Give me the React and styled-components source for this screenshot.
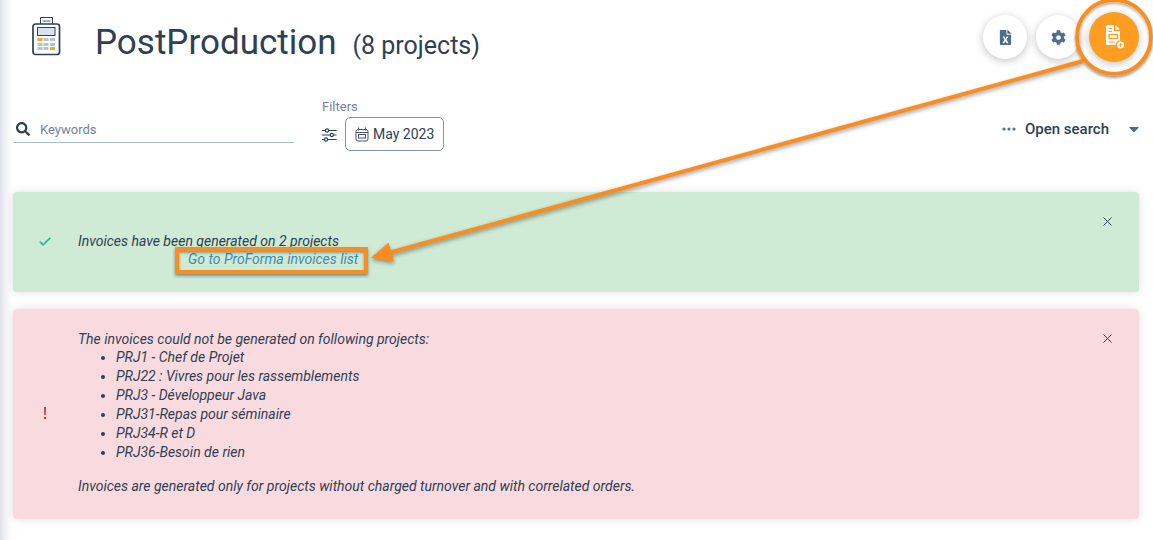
import React from "react";
import styled, { createGlobalStyle } from "styled-components";
import { FaFileExcel, FaCog, FaSearch, FaCaretDown } from "react-icons/fa";

const ink = "#2e4053";
const slate = "#4f6d8c";
const orange = "#fb8c1e";

const GlobalStyle = createGlobalStyle`
  *, *::before, *::after { box-sizing: border-box; }
  body {
    margin: 0;
    background: #fff;
    color: ${ink};
    font-family: Roboto, "Liberation Sans", sans-serif;
    font-size: 13px;
  }
  button, input { font: inherit; color: inherit; }
  svg { display: block; flex: none; }
`;

const Page = styled.main`
  position: relative;
  min-height: 100vh;
  padding: 12px 14px 21px 13px;
  overflow: hidden;
  background: linear-gradient(to right, #e0e1ec 0, #f5f5f9 6px, #fff 13px);
`;

const Header = styled.header`
  display: flex;
  align-items: center;
  height: 50px;
  padding-left: 18px;
`;

const Title = styled.h1`
  display: flex;
  align-items: baseline;
  gap: 16px;
  margin: 14px 0 0 34px;
  font-size: 35px;
  line-height: 44px;
  font-weight: 400;
`;

const Count = styled.span`
  font-size: 25px;
`;

const Actions = styled.div`
  display: flex;
  align-items: center;
  gap: 9px;
  margin-left: auto;
`;

const RoundButton = styled.button`
  position: relative;
  display: grid;
  place-items: center;
  width: ${(p) => (p.$primary ? 50 : 44)}px;
  height: ${(p) => (p.$primary ? 50 : 44)}px;
  padding: 0;
  border: 0;
  border-radius: 50%;
  background: ${(p) => (p.$primary ? "#fe9d22" : "#fff")};
  color: ${(p) => (p.$primary ? "#fff" : slate)};
  box-shadow: 0 2px 8px rgba(0, 0, 0, 0.24);
  cursor: pointer;
`;

const Ring = styled.span`
  position: absolute;
  inset: -14px;
  border: 4px solid ${orange};
  border-radius: 50%;
  box-shadow: 0 2px 3px rgba(0, 0, 0, 0.4), inset 0 2px 3px rgba(0, 0, 0, 0.3);
`;

const Toolbar = styled.div`
  display: flex;
  align-items: flex-end;
  margin-top: 36px;
`;

const SearchField = styled.label`
  display: flex;
  align-items: center;
  gap: 10px;
  width: 281px;
  height: 27px;
  margin-bottom: 8px;
  padding-left: 3px;
  border-bottom: 1px solid #a9bdd3;
`;

const SearchInput = styled.input`
  flex: 1;
  min-width: 0;
  padding: 0;
  border: 0;
  outline: 0;
  background: transparent;
  &::placeholder { color: #71839a; opacity: 1; }
`;

const Filters = styled.div`
  margin-left: 28px;
`;

const FilterLabel = styled.div`
  color: #71839a;
  line-height: 18px;
`;

const FilterRow = styled.div`
  display: flex;
  align-items: center;
  gap: 8px;
  margin-top: 1px;
`;

const DateButton = styled.button`
  display: flex;
  align-items: center;
  gap: 4px;
  height: 34px;
  padding: 0 9px;
  border: 1px solid #8495ad;
  border-radius: 5px;
  background: #fff;
  font-size: 14px;
  cursor: pointer;
`;

const OpenSearch = styled.button`
  display: flex;
  align-items: center;
  margin: 0 -3px 12px auto;
  padding: 0;
  border: 0;
  background: none;
  font-size: 15px;
  line-height: 20px;
  font-weight: 500;
  cursor: pointer;
`;

const OpenSearchLabel = styled.span`
  margin: 0 17px 0 9px;
`;

const Alerts = styled.div`
  display: grid;
  gap: 17px;
  margin-top: 41px;
`;

const Alert = styled.section`
  display: grid;
  grid-template-columns: 65px 1fr 62px;
  border-radius: 4px;
  padding: ${(p) => (p.$success ? "40px 0 23px" : "21px 0 24px")};
  position: relative;
  background: ${(p) => (p.$success ? "#cfead5" : "#f9dbdf")};
  box-shadow: 0 0 10px rgba(0, 0, 0, 0.12);
  font-size: 14px;
  font-style: italic;
`;

const Status = styled.div`
  position: absolute;
  inset: 0 auto 0 0;
  display: grid;
  place-items: center;
  width: 64px;
  padding-bottom: 2px;
`;

const Message = styled.div`
  grid-column: 2;
  line-height: 18px;
`;

const Text = styled.p`
  margin: 0;
`;

const LinkLine = styled.p`
  margin: 0;
  padding-left: 110px;
  line-height: 19px;
`;

const MarkedLink = styled.a`
  position: relative;
  color: #3f8bad;
  text-decoration: none;
  &::after {
    content: "";
    position: absolute;
    inset: -4px -10px -7px -13px;
    border: 4px solid ${orange};
    box-shadow: 0 2px 3px rgba(0, 0, 0, 0.4), inset 0 2px 3px rgba(0, 0, 0, 0.35);
  }
`;

const ProjectList = styled.ul`
  margin: 0 0 15px;
  padding-left: 38px;
  line-height: 19px;
`;

const CloseButton = styled.button`
  position: absolute;
  top: 20px;
  right: 22px;
  display: grid;
  place-items: center;
  width: 19px;
  height: 19px;
  padding: 0;
  border: 0;
  background: none;
  cursor: pointer;
`;

const Arrow = styled.svg`
  position: absolute;
  top: 61px;
  left: 370px;
  width: calc(100% - 440px);
  height: 197px;
  overflow: visible;
  pointer-events: none;
  filter: drop-shadow(0 2px 2px rgba(0, 0, 0, 0.4));
`;

const CalculatorIcon = () => (
  <svg width="30" height="40" viewBox="0 0 30 40" fill="none" aria-hidden="true">
    <path d="M9.500 7V0.500h12V7" stroke={ink} />
    <path d="M11.500 4h8" stroke="#8495ad" strokeWidth="1.500" />
    <rect x="2" y="7" width="26.500" height="30.500" rx="2.500" stroke={ink} strokeWidth="1.700" />
    <rect x="6.500" y="10.500" width="17.500" height="8" fill="#d9e0ef" stroke={ink} />
    {[21, 26, 30].map((y, r) =>
      [6.5, 12.5, 19].map((x, c) => (
        <rect
          key={`${r}${c}`}
          x={x}
          y={y}
          width="5"
          height="3"
          fill={(r === 0 && c === 0) || (r === 2 && c === 2) ? "#f9a825" : "#b4c3d3"}
        />
      ))
    )}
  </svg>
);

const InvoiceIcon = () => (
  <svg width="20" height="24" viewBox="0 0 20 24" aria-hidden="true">
    <path d="M3.500 0H10v6h6v9.500a4.500 4.500 0 0 0-4.500 4.500H3.500A1.500 1.500 0 0 1 2 18.500V1.500A1.500 1.500 0 0 1 3.500 0Z" fill="#fff" />
    <path d="M11.500 0 16 4.500h-4.500Z" fill="#fff" />
    <path d="M4.500 3.500H8M4.500 6.500H8M4.500 17h6" stroke="#fe9d22" strokeWidth="1.200" />
    <rect x="5" y="9.500" width="8.500" height="4" fill="none" stroke="#fe9d22" strokeWidth="1.300" />
    <circle cx="16.500" cy="20" r="3.500" fill="#fff" />
    <path d="M16.500 18.300v3.400M14.800 20h3.400" stroke="#fe9d22" strokeWidth="1.200" />
  </svg>
);

const SlidersIcon = () => (
  <svg width="15" height="16" viewBox="0 -2 15 16" fill="#fff" stroke={ink} strokeWidth="1.200" aria-hidden="true">
    <path d="M0 2.500h14.500M0 7h14.500M0 11.500h14.500" />
    <circle cx="5" cy="2.500" r="1.600" />
    <circle cx="9.800" cy="7" r="1.600" />
    <circle cx="4" cy="11.500" r="1.600" />
  </svg>
);

const CalendarIcon = () => (
  <svg width="14" height="15" viewBox="0 0 14 15" fill="none" stroke="#46566a" aria-hidden="true">
    <rect x="1" y="2.500" width="12" height="11.500" rx="2" />
    <path d="M1 5.500h12M3.500 0.500v3M10.500 0.500v3" />
    <rect x="3.500" y="7.500" width="7" height="3.500" />
  </svg>
);

const DotsIcon = () => (
  <svg width="14" height="4" viewBox="0 0 14 4" fill={slate} aria-hidden="true">
    <circle cx="2" cy="2" r="1.600" />
    <circle cx="7" cy="2" r="1.600" />
    <circle cx="12" cy="2" r="1.600" />
  </svg>
);

const CheckIcon = () => (
  <svg width="12" height="9" viewBox="0 0 12 9" fill="none" stroke="#2fb795" strokeWidth="1.700" aria-label="Success">
    <path d="m0.700 4.500 3.300 3.300 7.300-7" />
  </svg>
);

const ExclamationIcon = () => (
  <svg width="2" height="12" viewBox="0 0 2 12" fill="#dc3030" aria-label="Error">
    <path d="M0 0h2l-.3 8H.3ZM0 10h2v2H0Z" />
  </svg>
);

const CloseIcon = () => (
  <svg width="9" height="9" viewBox="0 0 9 9" stroke={ink} aria-hidden="true">
    <path d="m.5.500 8 8m0-8-8 8" />
  </svg>
);

const projects = [
  "PRJ1 - Chef de Projet",
  "PRJ22 : Vivres pour les rassemblements",
  "PRJ3 - Développeur Java",
  "PRJ31-Repas pour séminaire",
  "PRJ34-R et D",
  "PRJ36-Besoin de rien",
];

export default function App() {
  return (
    <>
      <GlobalStyle />
      <Page>
        <Header>
          <CalculatorIcon />
          <Title>
            PostProduction <Count>(8 projects)</Count>
          </Title>
          <Actions>
            <RoundButton aria-label="Export to Excel">
              <FaFileExcel size={15} />
            </RoundButton>
            <RoundButton aria-label="Settings">
              <FaCog size={15} />
            </RoundButton>
            <RoundButton $primary aria-label="Generate invoices">
              <InvoiceIcon />
              <Ring />
            </RoundButton>
          </Actions>
        </Header>

        <Toolbar>
          <SearchField>
            <FaSearch size={14} />
            <SearchInput type="text" placeholder="Keywords" aria-label="Keywords" />
          </SearchField>
          <Filters>
            <FilterLabel>Filters</FilterLabel>
            <FilterRow>
              <SlidersIcon />
              <DateButton>
                <CalendarIcon />
                May 2023
              </DateButton>
            </FilterRow>
          </Filters>
          <OpenSearch>
            <DotsIcon />
            <OpenSearchLabel>Open search</OpenSearchLabel>
            <FaCaretDown size={16} color={slate} />
          </OpenSearch>
        </Toolbar>

        <Alerts>
          <Alert $success>
            <Status>
              <CheckIcon />
            </Status>
            <Message>
              <Text>Invoices have been generated on 2 projects</Text>
              <LinkLine>
                <MarkedLink href="#proforma">Go to ProForma invoices list</MarkedLink>
              </LinkLine>
            </Message>
            <CloseButton aria-label="Close">
              <CloseIcon />
            </CloseButton>
          </Alert>
          <Alert>
            <Status>
              <ExclamationIcon />
            </Status>
            <Message>
              <Text>The invoices could not be generated on following projects:</Text>
              <ProjectList>
                {projects.map((name) => (
                  <li key={name}>{name}</li>
                ))}
              </ProjectList>
              <Text>Invoices are generated only for projects without charged turnover and with correlated orders.</Text>
            </Message>
            <CloseButton aria-label="Close">
              <CloseIcon />
            </CloseButton>
          </Alert>
        </Alerts>

        <Arrow aria-hidden="true">
          <defs>
            <marker
              id="head"
              markerUnits="userSpaceOnUse"
              markerWidth="22"
              markerHeight="20"
              refX="18"
              refY="10"
              orient="auto"
            >
              <path d="M0 0 21 10 0 20Z" fill={orange} />
            </marker>
          </defs>
          <line x1="100%" y1="0" x2="4" y2="196" stroke={orange} strokeWidth="4" markerEnd="url(#head)" />
        </Arrow>
      </Page>
    </>
  );
}
